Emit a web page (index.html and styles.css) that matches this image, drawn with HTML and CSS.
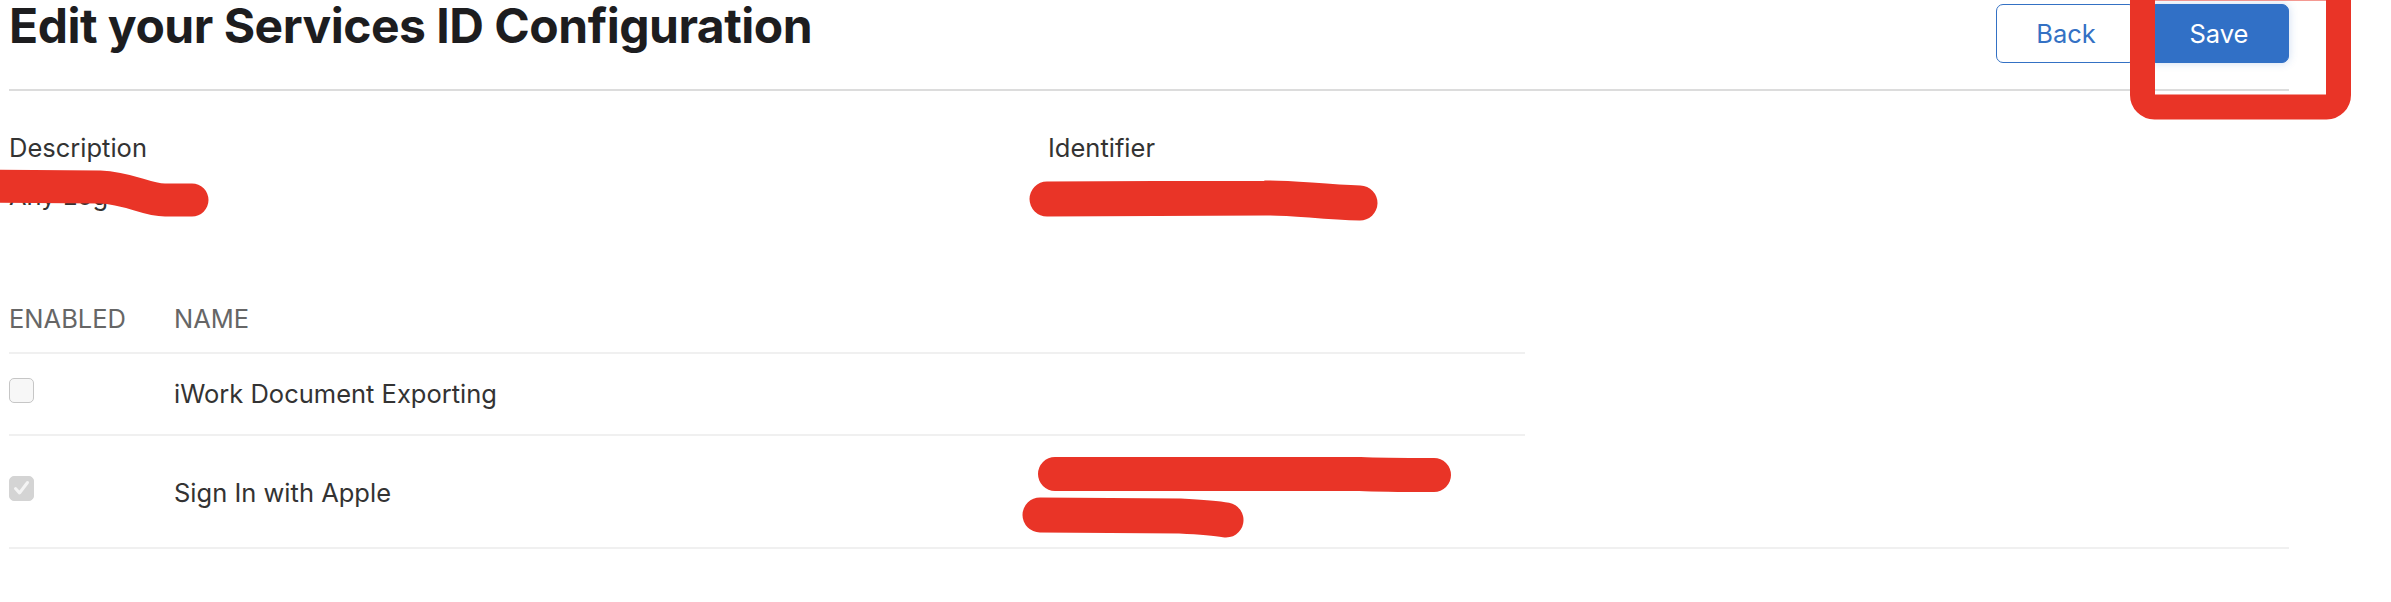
FILE: index.html
```html
<!DOCTYPE html>
<html lang="en">
<head>
<meta charset="utf-8">
<title>Edit your Services ID Configuration</title>
<link rel="stylesheet" href="styles.css">
</head>
<body>
<div class="page">
  <header class="topbar">
    <h1 class="title">Edit your Services ID Configuration</h1>
    <div class="actions">
      <button class="btn btn-outline">Back</button>
      <button class="btn btn-primary">Save</button>
    </div>
  </header>

  <section class="details">
    <div class="field">
      <div class="label">Description</div>
      <div class="value">Any Log</div>
    </div>
    <div class="field">
      <div class="label">Identifier</div>
      <div class="value"></div>
    </div>
  </section>

  <div class="table">
    <div class="thead narrow">
      <div class="c1">ENABLED</div>
      <div class="c2">NAME</div>
    </div>
    <div class="row row-single narrow">
      <div class="c1"><span class="cb"></span></div>
      <div class="c2">iWork Document Exporting</div>
    </div>
    <div class="row row-double">
      <div class="c1"><span class="cb cb-checked"><svg viewBox="0 0 25 25" width="25" height="25"><path d="M6.5 12.5 L10.5 17 L18.5 6.5" fill="none" stroke="#f4f4f4" stroke-width="3" stroke-linecap="round" stroke-linejoin="round"/></svg></span></div>
      <div class="c2">Sign In with Apple</div>
      <div class="c3"></div>
    </div>
  </div>

  <svg class="marks" width="2391" height="602" viewBox="0 0 2391 602">
    <g fill="none" stroke="#e93427" stroke-linecap="round" stroke-linejoin="round">
      <rect x="2142.5" y="-12" width="196" height="119" rx="12" stroke-width="25"/>
      <path d="M-20 186 L100 187 C130 188 145 200 165 200 L192 200" stroke-width="33"/>
      <path d="M1047 199 L1265 198 C1290 197 1320 202 1360 203" stroke-width="35"/>
      <path d="M1055 474 L1360 474 C1380 475 1400 475 1434 475" stroke-width="34"/>
      <path d="M1040 515 L1180 516 C1200 517 1215 518 1226 520" stroke-width="35"/>
    </g>
  </svg>
</div>
</body>
</html>
```

FILE: styles.css
```css
* {
  box-sizing: border-box;
}

html, body {
  margin: 0;
  padding: 0;
  background: #ffffff;
}

body {
  font-family: Inter, "Noto Sans", "Liberation Sans", sans-serif;
  color: #333333;
  font-size: 25.5px;
  line-height: 36px;
}

.page {
  position: relative;
  width: 2391px;
  height: 602px;
  overflow: hidden;
  padding: 0 102px 0 9px;
}

.topbar {
  display: flex;
  justify-content: space-between;
  align-items: flex-start;
  padding-bottom: 26px;
  border-bottom: 2px solid #dcdcdc;
}

.title {
  margin: 0;
  font-size: 48px;
  line-height: 51px;
  font-weight: 700;
  color: #1d1d1f;
  letter-spacing: -0.5px;
}

.actions {
  display: flex;
  gap: 13px;
  margin-top: 4px;
}

.btn {
  width: 140px;
  height: 59px;
  border-radius: 7px;
  font-family: Inter, "Noto Sans", "Liberation Sans", sans-serif;
  font-size: 25.5px;
  font-weight: 400;
  padding: 0;
  cursor: pointer;
}

.btn-outline {
  background: #ffffff;
  color: #3471c4;
  border: 1.5px solid #3471c4;
}

.btn-primary {
  background: #3170c6;
  color: #ffffff;
  border: 1.5px solid #3170c6;
  box-shadow: 0 0 8px rgba(49, 112, 198, 0.25);
}

.details {
  display: grid;
  grid-template-columns: 1039px 1fr;
  margin-top: 39px;
}

.label {
  color: #333333;
}

.value {
  margin-top: 12px;
  height: 36px;
  color: #333333;
}

.table {
  margin-top: 87px;
}

.thead,
.row {
  display: flex;
  align-items: flex-start;
  border-bottom: 2px solid #f0f0f0;
}

.narrow {
  width: 1516px;
}

.thead {
  padding-bottom: 15px;
  color: #666666;
}

.c1 {
  width: 165px;
  flex: none;
}

.c2 {
  width: 850px;
  flex: none;
}

.c3 {
  flex: 1;
  height: 72px;
}

.row-single {
  padding: 22px 0;
}

.row-single .cb {
  margin-top: 2px;
}

.row-double {
  padding: 19px 0 20px;
}

.row-double .c1,
.row-double .c2 {
  margin-top: 20px;
}

.row-double .cb {
  margin-top: 1px;
}

.cb {
  display: block;
  width: 25px;
  height: 25px;
  border: 1.5px solid #c6c6c6;
  border-radius: 5px;
  background: #f7f7f7;
}

.cb-checked {
  border-color: #d4d4d4;
  background: #d4d4d4;
}

.cb-checked svg {
  display: block;
  margin: -1.5px;
}

.marks {
  position: absolute;
  top: 0;
  left: 0;
  pointer-events: none;
}
```
